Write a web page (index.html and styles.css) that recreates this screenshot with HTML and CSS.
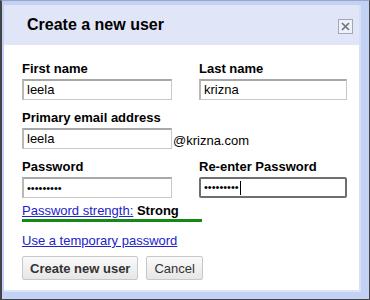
FILE: index.html
```html
<!DOCTYPE html>
<html>
<head>
<meta charset="utf-8">
<link rel="stylesheet" href="styles.css">
</head>
<body>
<div class="outer">
  <div class="frame">
    <div class="dialog">
      <div class="header">
        <h1 class="title">Create a new user</h1>
        <span class="close"><svg width="15" height="15" viewBox="0 0 15 15"><rect x="0.5" y="0.5" width="14" height="14" fill="#eef1fa" stroke="#a2a8b4"/><path d="M4 4 L11 11 M11 4 L4 11" stroke="#70747c" stroke-width="1.7"/></svg></span>
      </div>
      <div class="body">
        <div class="grid">
          <div class="field">
            <label class="label">First name</label>
            <div class="input">leela</div>
          </div>
          <div class="field">
            <label class="label">Last name</label>
            <div class="input">krizna</div>
          </div>
          <div class="field span">
            <label class="label">Primary email address</label>
            <div class="email-row"><div class="input w150">leela</div><span class="domain">@krizna.com</span></div>
          </div>
          <div class="field">
            <label class="label">Password</label>
            <div class="input dots">•••••••••</div>
          </div>
          <div class="field">
            <label class="label">Re-enter Password</label>
            <div class="input focused dots">•••••••••<span class="caret"></span></div>
          </div>
        </div>
        <div class="strength">
          <div class="strength-text"><a class="link" href="#">Password strength:</a> <b>Strong</b></div>
          <div class="bar"></div>
        </div>
        <a class="link temp" href="#">Use a temporary password</a>
        <div class="buttons">
          <button class="btn bold">Create new user</button>
          <button class="btn">Cancel</button>
        </div>
      </div>
    </div>
  </div>
</div>
</body>
</html>
```

FILE: styles.css
```css
html, body {
  margin: 0;
  padding: 0;
  background: #ffffff;
}
body {
  font-family: "Liberation Sans", Arial, sans-serif;
  color: #000;
}
.outer {
  width: 370px;
  height: 300px;
  box-sizing: border-box;
  border: 1px solid #444;
  border-left-width: 2px;
  border-top-color: #9aa6c8;
  background: #c3d1f5;
  padding: 4px 8px 7px 2px;
}
.frame {
  height: 100%;
  box-sizing: border-box;
  border-right: 2px solid #d8e0f6;
  border-bottom: 2px solid #dde3f6;
}
.dialog {
  height: 100%;
  background: #fff;
  display: flex;
  flex-direction: column;
}
.header {
  background: #e0e6f8;
  height: 40px;
  display: flex;
  align-items: center;
  justify-content: space-between;
  padding: 0 6px 0 23px;
}
.title {
  margin: 0;
  font-size: 16px;
  font-weight: bold;
  color: #000;
}
.close {
  display: flex;
  margin-top: 2px;
}
.body {
  padding: 16px 0 0 18px;
}
.grid {
  display: grid;
  grid-template-columns: 150px 148px;
  column-gap: 27px;
  row-gap: 10px;
}
.span {
  grid-column: 1 / 3;
}
.field {
  display: flex;
  flex-direction: column;
}
.label {
  font-size: 13px;
  font-weight: bold;
  line-height: 15px;
  margin-bottom: 3px;
}
.input {
  box-sizing: border-box;
  height: 21px;
  border: 1px solid #c8c8c8;
  border-top: 2px solid #a8a8a8;
  border-left: 2px solid #b8b8b8;
  font-size: 13px;
  line-height: 17px;
  padding: 0 3px;
  color: #000;
  background: #fff;
}
.w150 {
  width: 150px;
}
.email-row {
  display: flex;
  align-items: flex-end;
}
.domain {
  font-size: 13px;
  line-height: 15px;
  margin-left: 1px;
  margin-bottom: 1px;
}
.dots {
  font-size: 11px;
  display: flex;
  align-items: center;
}
.focused {
  border: 2px solid #6e6e6e;
  border-radius: 2px;
}
.caret {
  display: inline-block;
  width: 1px;
  height: 14px;
  background: #000;
  margin-left: 1px;
}
.strength {
  width: 180px;
  margin-top: 5px;
}
.strength-text {
  font-size: 13px;
  line-height: 15px;
}
.link {
  color: #2222cc;
  text-decoration: underline;
  font-size: 13px;
}
.bar {
  height: 3px;
  background: #138a13;
  margin-top: 1px;
}
.temp {
  display: inline-block;
  margin-top: 11px;
  line-height: 15px;
}
.buttons {
  display: flex;
  gap: 8px;
  margin-top: 7px;
}
.btn {
  height: 24px;
  box-sizing: border-box;
  border: 1px solid #c8c8c8;
  border-radius: 2px;
  background: linear-gradient(#fafafa, #e6e6e6);
  font-family: "Liberation Sans", Arial, sans-serif;
  font-size: 13px;
  color: #333;
  padding: 0 7px;
}
.bold {
  font-weight: bold;
}
```
